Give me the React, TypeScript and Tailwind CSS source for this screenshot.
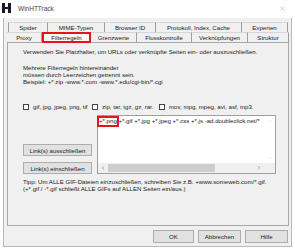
import React from 'react';
import { ChevronDown, ChevronLeft, ChevronRight, ChevronUp, X } from 'lucide-react';

type Tab = { name: string; w: string };

const row1: Tab[] = [
  { name: 'Spider', w: 'w-[40px]' },
  { name: 'MIME-Typen', w: 'w-[57px]' },
  { name: 'Browser ID', w: 'w-[51px]' },
  { name: 'Protokoll, Index, Cache', w: 'w-[86px]' },
  { name: 'Experten', w: 'w-[46px]' },
];

const row2: Tab[] = [
  { name: 'Proxy', w: 'w-[35px]' },
  { name: 'Filterregeln', w: 'w-[49px]' },
  { name: 'Grenzwerte', w: 'w-[46px]' },
  { name: 'Flusskontrolle', w: 'w-[55px]' },
  { name: 'Verknüpfungen', w: 'w-[56px]' },
  { name: 'Struktur', w: 'w-[41px]' },
];

function Checkbox({ label, w }: { label: string; w: string }) {
  return (
    <div className={`flex items-center gap-[4px] ${w}`}>
      <div className="h-[6px] w-[6px] shrink-0 border border-[#444] bg-white" />
      <span className="whitespace-nowrap">{label}</span>
    </div>
  );
}

function Button({ label, w }: { label: string; w: string }) {
  return (
    <div className={`flex items-center justify-center border border-[#adadad] bg-[#e1e1e1] ${w}`}>
      {label}
    </div>
  );
}

export default function App() {
  return (
    <div className="relative h-[249px] w-[295px] overflow-hidden bg-white font-['Liberation_Sans',Arial,sans-serif] text-[6.1px] leading-[7px] text-[#222]">
      {/* title bar */}
      <div className="flex h-[18px] items-center bg-white pl-[2px] pr-[9px]">
        <svg width="9" height="10" viewBox="0 0 9 10" className="mt-[-2px]">
          <rect x="0" y="0" width="9" height="10" fill="#1b1b27" />
          <rect x="3" y="0" width="3" height="4" fill="#fff" />
          <rect x="3" y="6" width="3" height="4" fill="#fff" />
        </svg>
        <span className="ml-[7px] mt-[-2px] text-[6.5px] text-[#444]">WinHTTrack</span>
        <X className="ml-auto mt-[-2px] text-[#9a9a9a]" size={7} strokeWidth={1.5} />
      </div>

      {/* body */}
      <div className="mx-[3px] flex h-[229px] flex-col border-x border-b border-[#b8b8b8] bg-[#f0f0f0]">
        {/* tab rows */}
        <div className="ml-[4px] mt-[4px] flex h-[10px]">
          {row1.map((t, i) => (
            <div
              key={t.name}
              className={`flex items-center justify-center whitespace-nowrap border-t border-r border-t-[#d6d6d6] border-r-[#9c9c9c] ${i === 0 ? 'border-l border-l-[#9c9c9c]' : ''} ${t.w}`}
            >
              {t.name}
            </div>
          ))}
        </div>
        <div className="ml-[3px] flex h-[10px]">
          {row2.map((t, i) => (
            <div
              key={t.name}
              className={`flex items-center justify-center whitespace-nowrap border-t border-t-[#d6d6d6] ${i === 1 ? 'bg-[#f7f7f7]' : 'border-r border-r-[#9c9c9c]'} ${t.w}`}
            >
              {t.name}
            </div>
          ))}
        </div>

        {/* tab page */}
        <div className="ml-[3px] flex h-[184px] w-[282px] flex-col border border-[#a8a8a8] pl-[15px]">
          <div className="mt-[5px]">
            Verwenden Sie Platzhalter, um URLs oder verknüpfte Seiten ein- oder auszuschließen.
          </div>
          <div className="mt-[9px]">
            <div>Mehrere Filterregeln hintereinander</div>
            <div>müssen durch Leerzeichen getrennt sein.</div>
            <div>Beispiel: +*.zip -www.*.com -www.*.edu/cgi-bin/*.cgi</div>
          </div>

          <div className="mt-[18px] flex h-[7px] items-center">
            <Checkbox label="gif, jpg, jpeg, png, tif" w="w-[69px]" />
            <Checkbox label="zip, tar, tgz, gz, rar." w="w-[67px]" />
            <Checkbox label="mov, mpg, mpeg, avi, asf, mp3." w="w-[100px]" />
          </div>

          <div className="mt-[5px] flex h-[59px] gap-[5px]">
            <div className="flex w-[69px] flex-col justify-end gap-[6px]">
              <Button label="Link(s) ausschließen" w="h-[12px] w-[69px]" />
              <Button label="Link(s) einschließen" w="h-[12px] w-[69px]" />
            </div>
            <div className="flex w-[179px] flex-col border border-[#a0a0a0] bg-white">
              <div className="flex flex-1">
                <div className="flex-1 whitespace-nowrap pl-[1px] pt-[1px]">
                  +*.png +*.gif +*.jpg +*.jpeg +*.css +*.js -ad.doubleclick.net/*
                </div>
                <div className="flex w-[11px] flex-col items-center justify-between py-[2px] text-[#c4c4c4]">
                  <ChevronUp size={6} strokeWidth={1.5} />
                  <ChevronDown size={6} strokeWidth={1.5} />
                </div>
              </div>
              <div className="flex h-[10px]">
                <div className="flex flex-1 items-center bg-[#f0f0f0]">
                  <div className="flex w-[10px] justify-center text-[#555]">
                    <ChevronLeft size={6} strokeWidth={2} />
                  </div>
                  <div className="h-[8px] w-[107px] bg-[#cdcdcd]" />
                  <div className="ml-auto flex w-[10px] justify-center text-[#555]">
                    <ChevronRight size={6} strokeWidth={2} />
                  </div>
                </div>
                <div className="w-[11px] bg-[#f0f0f0]" />
              </div>
            </div>
          </div>

          <div className="mt-[4px]">
            <div>Tipp: Um ALLE GIF-Dateien einzuschließen, schreiben Sie z.B. +www.someweb.com/*.gif.</div>
            <div>(+*.gif / -*.gif schließt ALLE GIFs auf ALLEN Seiten ein/aus.)</div>
          </div>
        </div>

        {/* dialog buttons */}
        <div className="mr-[3px] mt-[4px] flex justify-end gap-[4px]">
          <Button label="OK" w="h-[13px] w-[41px]" />
          <Button label="Abbrechen" w="h-[13px] w-[43px]" />
          <Button label="Hilfe" w="h-[13px] w-[43px]" />
        </div>
      </div>

      {/* red annotation boxes */}
      <div className="absolute left-[42px] top-[32px] h-[11px] w-[49px] border-2 border-[#e5141b]" />
      <div className="absolute left-[97px] top-[116px] h-[11px] w-[22px] border-2 border-[#e5141b]" />
    </div>
  );
}
